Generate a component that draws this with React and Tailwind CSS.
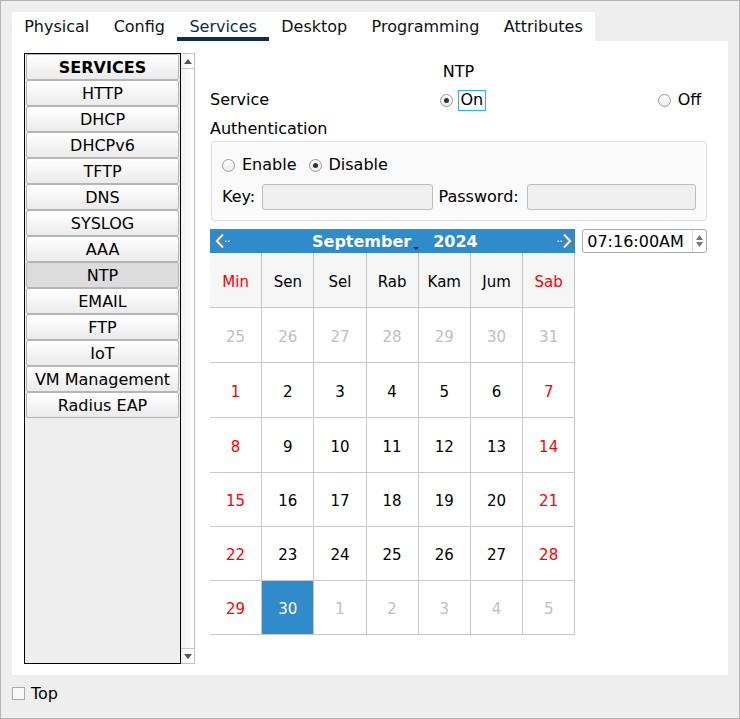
import React from "react";

const TABS = ["Physical", "Config", "Services", "Desktop", "Programming", "Attributes"];

const SERVICES = [
  "HTTP", "DHCP", "DHCPv6", "TFTP", "DNS", "SYSLOG", "AAA", "NTP",
  "EMAIL", "FTP", "IoT", "VM Management", "Radius EAP",
];

const DAY_NAMES = ["Min", "Sen", "Sel", "Rab", "Kam", "Jum", "Sab"];

const WEEKS = [
  [25, 26, 27, 28, 29, 30, 31].map((d) => ({ d, other: true })),
  [1, 2, 3, 4, 5, 6, 7].map((d) => ({ d })),
  [8, 9, 10, 11, 12, 13, 14].map((d) => ({ d })),
  [15, 16, 17, 18, 19, 20, 21].map((d) => ({ d })),
  [22, 23, 24, 25, 26, 27, 28].map((d) => ({ d })),
  [{ d: 29 }, { d: 30, sel: true }, ...[1, 2, 3, 4, 5].map((d) => ({ d, other: true }))],
];

function Radio({ checked }) {
  return (
    <span className="w-[13px] h-[13px] rounded-full border border-[#9c9c9c] bg-gradient-to-b from-white to-[#ececec] flex items-center justify-center shrink-0">
      {checked && <span className="w-[5px] h-[5px] rounded-full bg-[#333]" />}
    </span>
  );
}

function ArrowLeft() {
  return (
    <svg width="17" height="16" viewBox="0 0 17 16">
      <polyline points="9,1.5 3,8 9,14.5" fill="none" stroke="#8a8a8a" strokeWidth="3.4" />
      <polyline points="9,1.5 3,8 9,14.5" fill="none" stroke="#ffffff" strokeWidth="1.8" />
      <rect x="11" y="7.5" width="1.5" height="1.5" fill="#e4e4e4" />
      <rect x="14" y="7.5" width="1.5" height="1.5" fill="#e4e4e4" />
    </svg>
  );
}

function ArrowRight() {
  return (
    <svg width="17" height="16" viewBox="0 0 17 16">
      <rect x="1.5" y="7.5" width="1.5" height="1.5" fill="#e4e4e4" />
      <rect x="4.5" y="7.5" width="1.5" height="1.5" fill="#e4e4e4" />
      <polyline points="8,1.5 14,8 8,14.5" fill="none" stroke="#8a8a8a" strokeWidth="3.4" />
      <polyline points="8,1.5 14,8 8,14.5" fill="none" stroke="#ffffff" strokeWidth="1.8" />
    </svg>
  );
}

function Calendar() {
  return (
    <div className="w-[366px]">
      <div className="h-[24px] bg-[#2f8bc9] flex items-center text-white">
        <div className="w-[102px] pl-[4px] flex items-center">
          <ArrowLeft />
        </div>
        <span className="font-bold text-[16px] leading-[20px] pt-[2px]">September</span>
        <svg width="6" height="4" viewBox="0 0 6 4" className="ml-[2px] mt-[15px]">
          <polygon points="0,0 6,0 3,3" fill="#333" />
        </svg>
        <span className="ml-[14px] font-bold text-[16px] leading-[20px] pt-[2px]">2024</span>
        <div className="ml-auto pr-[2px] flex items-center">
          <ArrowRight />
        </div>
      </div>
      <div className="grid grid-cols-7 grid-rows-[55px_55px_55px_55px_54px_54px_54px] h-[382px] text-[15px]">
        {DAY_NAMES.map((n, i) => (
          <div
            key={n}
            className={`bg-[#f6f6f6] border-b border-r border-[#c8c8c8] flex items-center justify-center pt-[4px] ${i === 0 || i === 6 ? "text-[#ff0000]" : "text-black"}`}
          >
            {n}
          </div>
        ))}
        {WEEKS.flat().map((c, i) => {
          const col = i % 7;
          let color = "text-black";
          if (c.other) color = "text-[#c0c0c0]";
          else if (col === 0 || col === 6) color = "text-[#ff0000]";
          if (c.sel) color = "text-white";
          return (
            <div
              key={i}
              className={`border-b border-r border-[#c8c8c8] flex items-center justify-center ${i < 28 ? "pt-[4px]" : "pt-[3px]"} ${c.sel ? "bg-[#2f8bc9]" : "bg-white"} ${color}`}
            >
              {c.d}
            </div>
          );
        })}
      </div>
    </div>
  );
}

export default function App() {
  return (
    <div className="w-[740px] h-[719px] bg-[#eeeeee] border border-[#b4b4b4] pl-[11px] pr-[11px] pt-[11px] font-['DejaVu_Sans',sans-serif] text-[16px] text-black overflow-hidden">
      {/* tab strip */}
      <div className="flex h-[29px]">
        <div className="flex bg-white">
          {TABS.map((t) => (
            <div
              key={t}
              className={`px-[12.2px] pt-[6px] leading-[18px] border-b-4 ${t === "Services" ? "border-[#0f2b4f] text-[#0f2b4f]" : "border-transparent text-[#111]"}`}
            >
              {t}
            </div>
          ))}
        </div>
      </div>

      {/* panel */}
      <div className="bg-white h-[634px] flex pl-[12px] pt-[12px]">
        {/* service list */}
        <div className="flex h-[611px]">
          <div className="w-[157px] h-full border border-black bg-[#eeeeee] px-[1px] flex flex-col">
            <div className="h-[26px] border border-[#b5b5b5] rounded-[2px] bg-gradient-to-b from-white to-[#ebebeb] flex items-center justify-center font-bold leading-[18px] pt-[2px]">
              SERVICES
            </div>
            {SERVICES.map((s) => (
              <div
                key={s}
                className={`h-[26px] border border-[#b5b5b5] rounded-[2px] flex items-center justify-center leading-[18px] pt-[2px] ${s === "NTP" ? "bg-[#dcdcdc]" : "bg-gradient-to-b from-white to-[#ebebeb]"}`}
              >
                {s}
              </div>
            ))}
          </div>
          <div className="w-[14px] h-full border border-l-0 border-[#c2c2c2] bg-gradient-to-r from-[#f2f2f2] to-white flex flex-col">
            <div className="h-[15px] border-b border-[#c8c8c8] flex items-center justify-center">
              <svg width="8" height="5" viewBox="0 0 8 5">
                <polygon points="0,5 8,5 4,0" fill="#555" />
              </svg>
            </div>
            <div className="flex-1" />
            <div className="h-[15px] border-t border-[#c8c8c8] flex items-center justify-center">
              <svg width="8" height="5" viewBox="0 0 8 5">
                <polygon points="0,0 8,0 4,5" fill="#555" />
              </svg>
            </div>
          </div>
        </div>

        {/* right side */}
        <div className="ml-[15px] w-[497px] flex flex-col">
          <div className="mt-[9px] h-[20px] leading-[20px] text-center">NTP</div>
          <div className="mt-[7px] h-[22px] flex items-center">
            <span className="w-[230px] leading-[20px]">Service</span>
            <Radio checked />
            <span className="ml-[5px] h-[21px] px-[1.5px] border border-[#2db3df] leading-[18px]">On</span>
            <span className="ml-[172px] flex items-center">
              <Radio />
              <span className="ml-[7px] leading-[20px]">Off</span>
            </span>
          </div>
          <div className="mt-[8px] h-[20px] leading-[20px]">Authentication</div>
          <div className="mt-[2px] ml-[1px] h-[80px] border border-[#e2e2e2] rounded-[3px] bg-[#fafafa] px-[10px] pt-[12px]">
            <div className="h-[22px] flex items-center">
              <Radio />
              <span className="ml-[7px]">Enable</span>
              <span className="ml-[12px] flex items-center">
                <Radio checked />
                <span className="ml-[7px]">Disable</span>
              </span>
            </div>
            <div className="mt-[8px] flex items-center h-[26px]">
              <span>Key:</span>
              <span className="ml-[7px] w-[171px] h-[26px] bg-[#efefef] border border-[#bdbdbd] rounded-[3px]" />
              <span className="ml-[6px]">Password:</span>
              <span className="ml-[8px] w-[170px] h-[26px] bg-[#efefef] border border-[#bdbdbd] rounded-[3px]" />
            </div>
          </div>
          <div className="mt-[8px] flex items-start">
            <Calendar />
            <div className="ml-[7px] w-[125px] h-[24px] border border-[#a9a9a9] rounded-[3px] bg-white flex items-center">
              <span className="pl-[4px] leading-[20px] pt-[2px]">07:16:00AM</span>
              <div className="ml-auto w-[14px] h-full border-l border-[#dcdcdc] flex flex-col items-center justify-center gap-[2px]">
                <svg width="7" height="5" viewBox="0 0 7 5">
                  <polygon points="0,5 7,5 3.5,0" fill="#777" />
                </svg>
                <svg width="7" height="5" viewBox="0 0 7 5">
                  <polygon points="0,0 7,0 3.5,5" fill="#777" />
                </svg>
              </div>
            </div>
          </div>
        </div>
      </div>

      {/* bottom */}
      <div className="mt-[11px] flex items-center h-[14px]">
        <span className="w-[13px] h-[13px] border border-[#a8a8a8] bg-[#f8f8f8]" />
        <span className="ml-[6px] leading-[18px] pt-[2px]">Top</span>
      </div>
    </div>
  );
}
